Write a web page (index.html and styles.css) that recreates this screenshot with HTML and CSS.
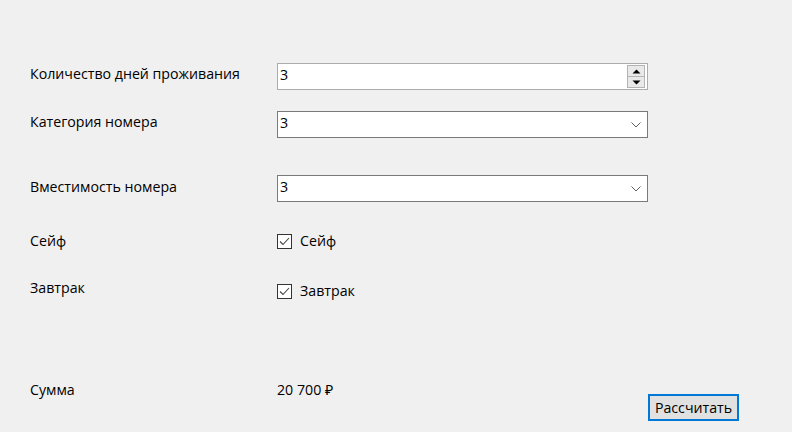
FILE: index.html
```html
<!DOCTYPE html>
<html lang="ru">
<head>
<meta charset="utf-8">
<link rel="stylesheet" href="styles.css">
</head>
<body>
<div class="form">
  <div class="row r1">
    <div class="label">Количество дней проживания</div>
    <div class="field numeric">
      <span class="val">3</span>
      <div class="spin">
        <div class="sbtn"><svg width="9" height="5" viewBox="0 0 9 5"><path d="M0.5 4.5 L4.5 0.5 L8.5 4.5 Z" fill="#000"/></svg></div>
        <div class="sbtn"><svg width="9" height="5" viewBox="0 0 9 5"><path d="M0.5 0.5 L4.5 4.5 L8.5 0.5 Z" fill="#000"/></svg></div>
      </div>
    </div>
  </div>
  <div class="row r2">
    <div class="label">Категория номера</div>
    <div class="field combo">
      <span class="val">3</span>
      <svg class="chev" width="10" height="6" viewBox="0 0 10 6"><path d="M0.5 0.5 L5 5 L9.5 0.5" fill="none" stroke="#606060" stroke-width="1"/></svg>
    </div>
  </div>
  <div class="row r3">
    <div class="label l3">Вместимость номера</div>
    <div class="field combo">
      <span class="val">3</span>
      <svg class="chev" width="10" height="6" viewBox="0 0 10 6"><path d="M0.5 0.5 L5 5 L9.5 0.5" fill="none" stroke="#606060" stroke-width="1"/></svg>
    </div>
  </div>
  <div class="row r4">
    <div class="label">Сейф</div>
    <div class="check">
      <span class="box"><svg width="13" height="13" viewBox="0 0 13 13"><path d="M2 6.5 L5 9.5 L11 3" fill="none" stroke="#444" stroke-width="1.1"/></svg></span>
      <span class="ctext">Сейф</span>
    </div>
  </div>
  <div class="row r5">
    <div class="label">Завтрак</div>
    <div class="check c5">
      <span class="box"><svg width="13" height="13" viewBox="0 0 13 13"><path d="M2 6.5 L5 9.5 L11 3" fill="none" stroke="#444" stroke-width="1.1"/></svg></span>
      <span class="ctext">Завтрак</span>
    </div>
  </div>
  <div class="row r6">
    <div class="label">Сумма</div>
    <div class="sum">20 700 ₽</div>
    <button class="btn">Рассчитать</button>
  </div>
</div>
</body>
</html>
```
FILE: styles.css
```css
html, body {
  margin: 0;
  padding: 0;
  background: #f0f0f0;
}
body {
  width: 792px;
  height: 432px;
  overflow: hidden;
  font-family: "Open Sans", "Noto Sans", sans-serif;
  font-size: 14.2px;
  color: #000;
}
.form {
  padding-left: 30px;
  display: flex;
  flex-direction: column;
}
.row {
  display: flex;
  align-items: flex-start;
}
.label {
  width: 247px;
  flex: none;
  line-height: 20px;
  padding-top: 1px;
}
.r1 { margin-top: 63px; }
.r2 { margin-top: 21px; }
.r3 { margin-top: 37px; }
.l3 { padding-top: 2px; }
.r4 { margin-top: 28px; }
.r5 { margin-top: 26px; }
.r6 { margin-top: 78px; }

.field {
  box-sizing: border-box;
  width: 371px;
  height: 27px;
  background: #fff;
  display: flex;
  align-items: flex-start;
  padding: 1px 2px 0 2px;
  line-height: 20px;
}
.numeric {
  border: 1px solid #acacac;
}
.combo {
  border: 1px solid #7a7a7a;
}
.val { flex: 1; }
.spin {
  display: flex;
  flex-direction: column;
}
.sbtn {
  box-sizing: border-box;
  width: 18px;
  height: 12px;
  background: #e9e9e9;
  border: 1px solid #b4b4b4;
  display: flex;
  align-items: center;
  justify-content: center;
}
.sbtn + .sbtn { border-top: none; height: 11px; }
.chev {
  align-self: center;
  margin-right: 4px;
  margin-top: -1px;
}
.check {
  display: flex;
  align-items: center;
  line-height: 20px;
  height: 20px;
  padding-top: 1px;
}
.c5 { margin-top: 3px; }
.box {
  box-sizing: border-box;
  width: 15px;
  height: 15px;
  border: 1px solid #333;
  background: #fff;
  display: flex;
  align-items: center;
  justify-content: center;
  margin-right: 8px;
}
.sum {
  width: 371px;
  flex: none;
  line-height: 20px;
  padding-top: 1px;
}
.btn {
  box-sizing: border-box;
  margin-top: 15px;
  width: 91px;
  height: 27px;
  background: #e1e1e1;
  border: 2px solid #0078d7;
  font-family: "Open Sans", "Noto Sans", sans-serif;
  font-size: 14.2px;
  color: #000;
  padding: 0;
  line-height: 20px;
}
```
